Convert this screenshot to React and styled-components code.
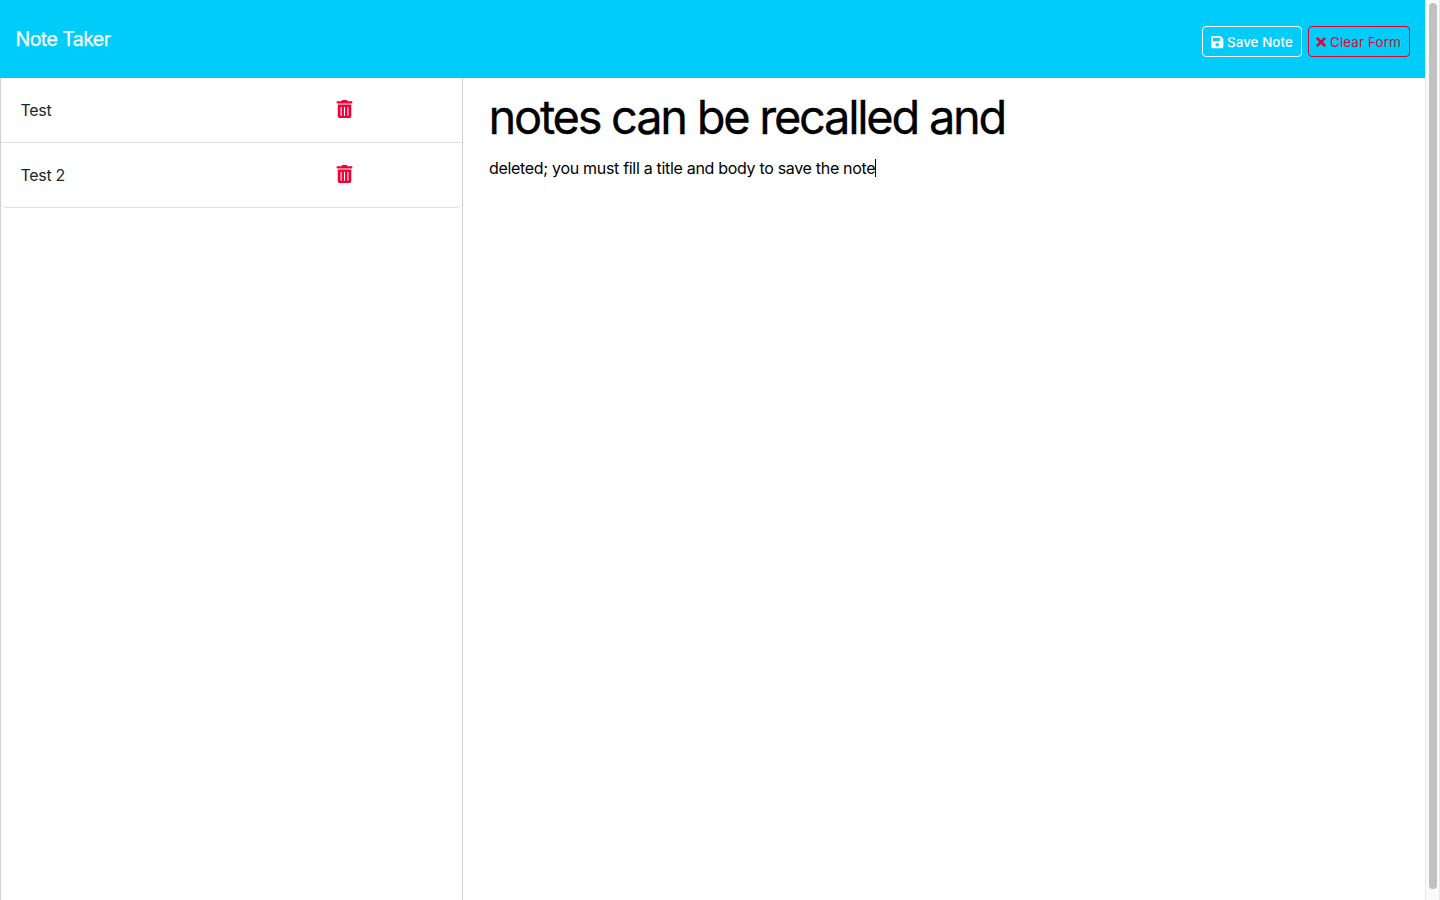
import React from "react";
import styled, { createGlobalStyle } from "styled-components";
import { FaSave, FaTimes, FaTrashAlt } from "react-icons/fa";

const GlobalStyle = createGlobalStyle`
  *, *::before, *::after { box-sizing: border-box; }
  body {
    margin: 0;
    overflow: hidden;
    background: #fff;
    color: #212529;
    font: 400 16px/24px Inter, "Liberation Sans", sans-serif;
  }
`;

const Window = styled.div`
  display: flex;
  height: 900px;
`;

const Page = styled.div`
  flex: 1;
  min-width: 0;
  display: flex;
  flex-direction: column;
`;

const Navbar = styled.nav`
  display: flex;
  justify-content: space-between;
  height: 78px;
  padding: 24px 15px 0 15.6px;
  background: #00ccfa;
`;

const Brand = styled.a`
  color: #fff;
  font-size: 19.6px;
  line-height: 30px;
  letter-spacing: -0.62px;
  -webkit-text-stroke: 0.25px #fff;
`;

const Actions = styled.div`
  display: flex;
  gap: 6px;
  padding-top: 2px;
`;

const Button = styled.button`
  display: flex;
  align-items: center;
  width: ${(p) => p.$width}px;
  height: 31px;
  padding: 1px 0 0 ${(p) => p.$inset}px;
  border: 1px solid ${(p) => p.$color};
  border-radius: 4px;
  background: transparent;
  color: ${(p) => p.$color};
  font: ${(p) => p.$weight} 13.3px/20px Inter, "Liberation Sans", sans-serif;
  letter-spacing: ${(p) => p.$spacing}px;
  white-space: nowrap;

  svg {
    flex: none;
    width: ${(p) => p.$icon}px;
    height: 14px;
    margin: 0 ${(p) => p.$gap}px 1px 0;
  }
`;

const Main = styled.main`
  flex: 1;
  display: flex;
`;

const Sidebar = styled.aside`
  width: 463px;
  border: solid #d0d0d0;
  border-width: 0 1px;
`;

const NoteList = styled.ul`
  margin: 0;
  padding: 0;
  list-style: none;
`;

const NoteItem = styled.li`
  display: flex;
  height: 65px;
  padding: 20px 19.5px;
  border-bottom: 1px solid #dfdfdf;
  letter-spacing: -0.3px;

  &:last-child { border-radius: 0 0 5px 5px; }
`;

const NoteName = styled.span`
  width: 315.5px;
`;

const DeleteIcon = styled(FaTrashAlt)`
  width: 17px;
  height: 18px;
  margin-top: 2px;
  color: #f00037;
`;

const Editor = styled.section`
  flex: 1;
  padding: 3px 26px;
  color: #000;
`;

const Title = styled.h1`
  margin: 0 0 0 -0.5px;
  font-size: 47px;
  font-weight: 400;
  line-height: 72px;
  letter-spacing: -2.28px;
  -webkit-text-stroke: 0.3px #000;
`;

const Body = styled.p`
  display: flex;
  align-items: center;
  margin: 3px 0 0;
  letter-spacing: -0.31px;
`;

const Caret = styled.span`
  width: 1px;
  height: 18px;
  background: #000;
`;

const ScrollTrack = styled.div`
  width: 15px;
  padding: 3px;
  border: solid #e8e8e8;
  border-width: 0 1px;
  background: #fafafa;
`;

const ScrollThumb = styled.div`
  width: 8px;
  height: 886px;
  border-radius: 4px;
  background: #c1c1c1;
`;

const notes = ["Test", "Test 2"];

export default function App() {
  return (
    <Window>
      <GlobalStyle />
      <Page>
        <Navbar>
          <Brand>Note Taker</Brand>
          <Actions>
            <Button $color="#fff" $width={100} $inset={8} $icon={12.5} $gap={3.5} $weight={500} $spacing={0.1}>
              <FaSave />
              Save Note
            </Button>
            <Button $color="#e60032" $width={102} $inset={7} $icon={10} $gap={4} $weight={400} $spacing={0.18}>
              <FaTimes />
              Clear Form
            </Button>
          </Actions>
        </Navbar>
        <Main>
          <Sidebar>
            <NoteList>
              {notes.map((name) => (
                <NoteItem key={name}>
                  <NoteName>{name}</NoteName>
                  <DeleteIcon />
                </NoteItem>
              ))}
            </NoteList>
          </Sidebar>
          <Editor>
            <Title>notes can be recalled and</Title>
            <Body>
              <span>deleted; you must fill a title and body to save the note</span>
              <Caret />
            </Body>
          </Editor>
        </Main>
      </Page>
      <ScrollTrack>
        <ScrollThumb />
      </ScrollTrack>
    </Window>
  );
}
